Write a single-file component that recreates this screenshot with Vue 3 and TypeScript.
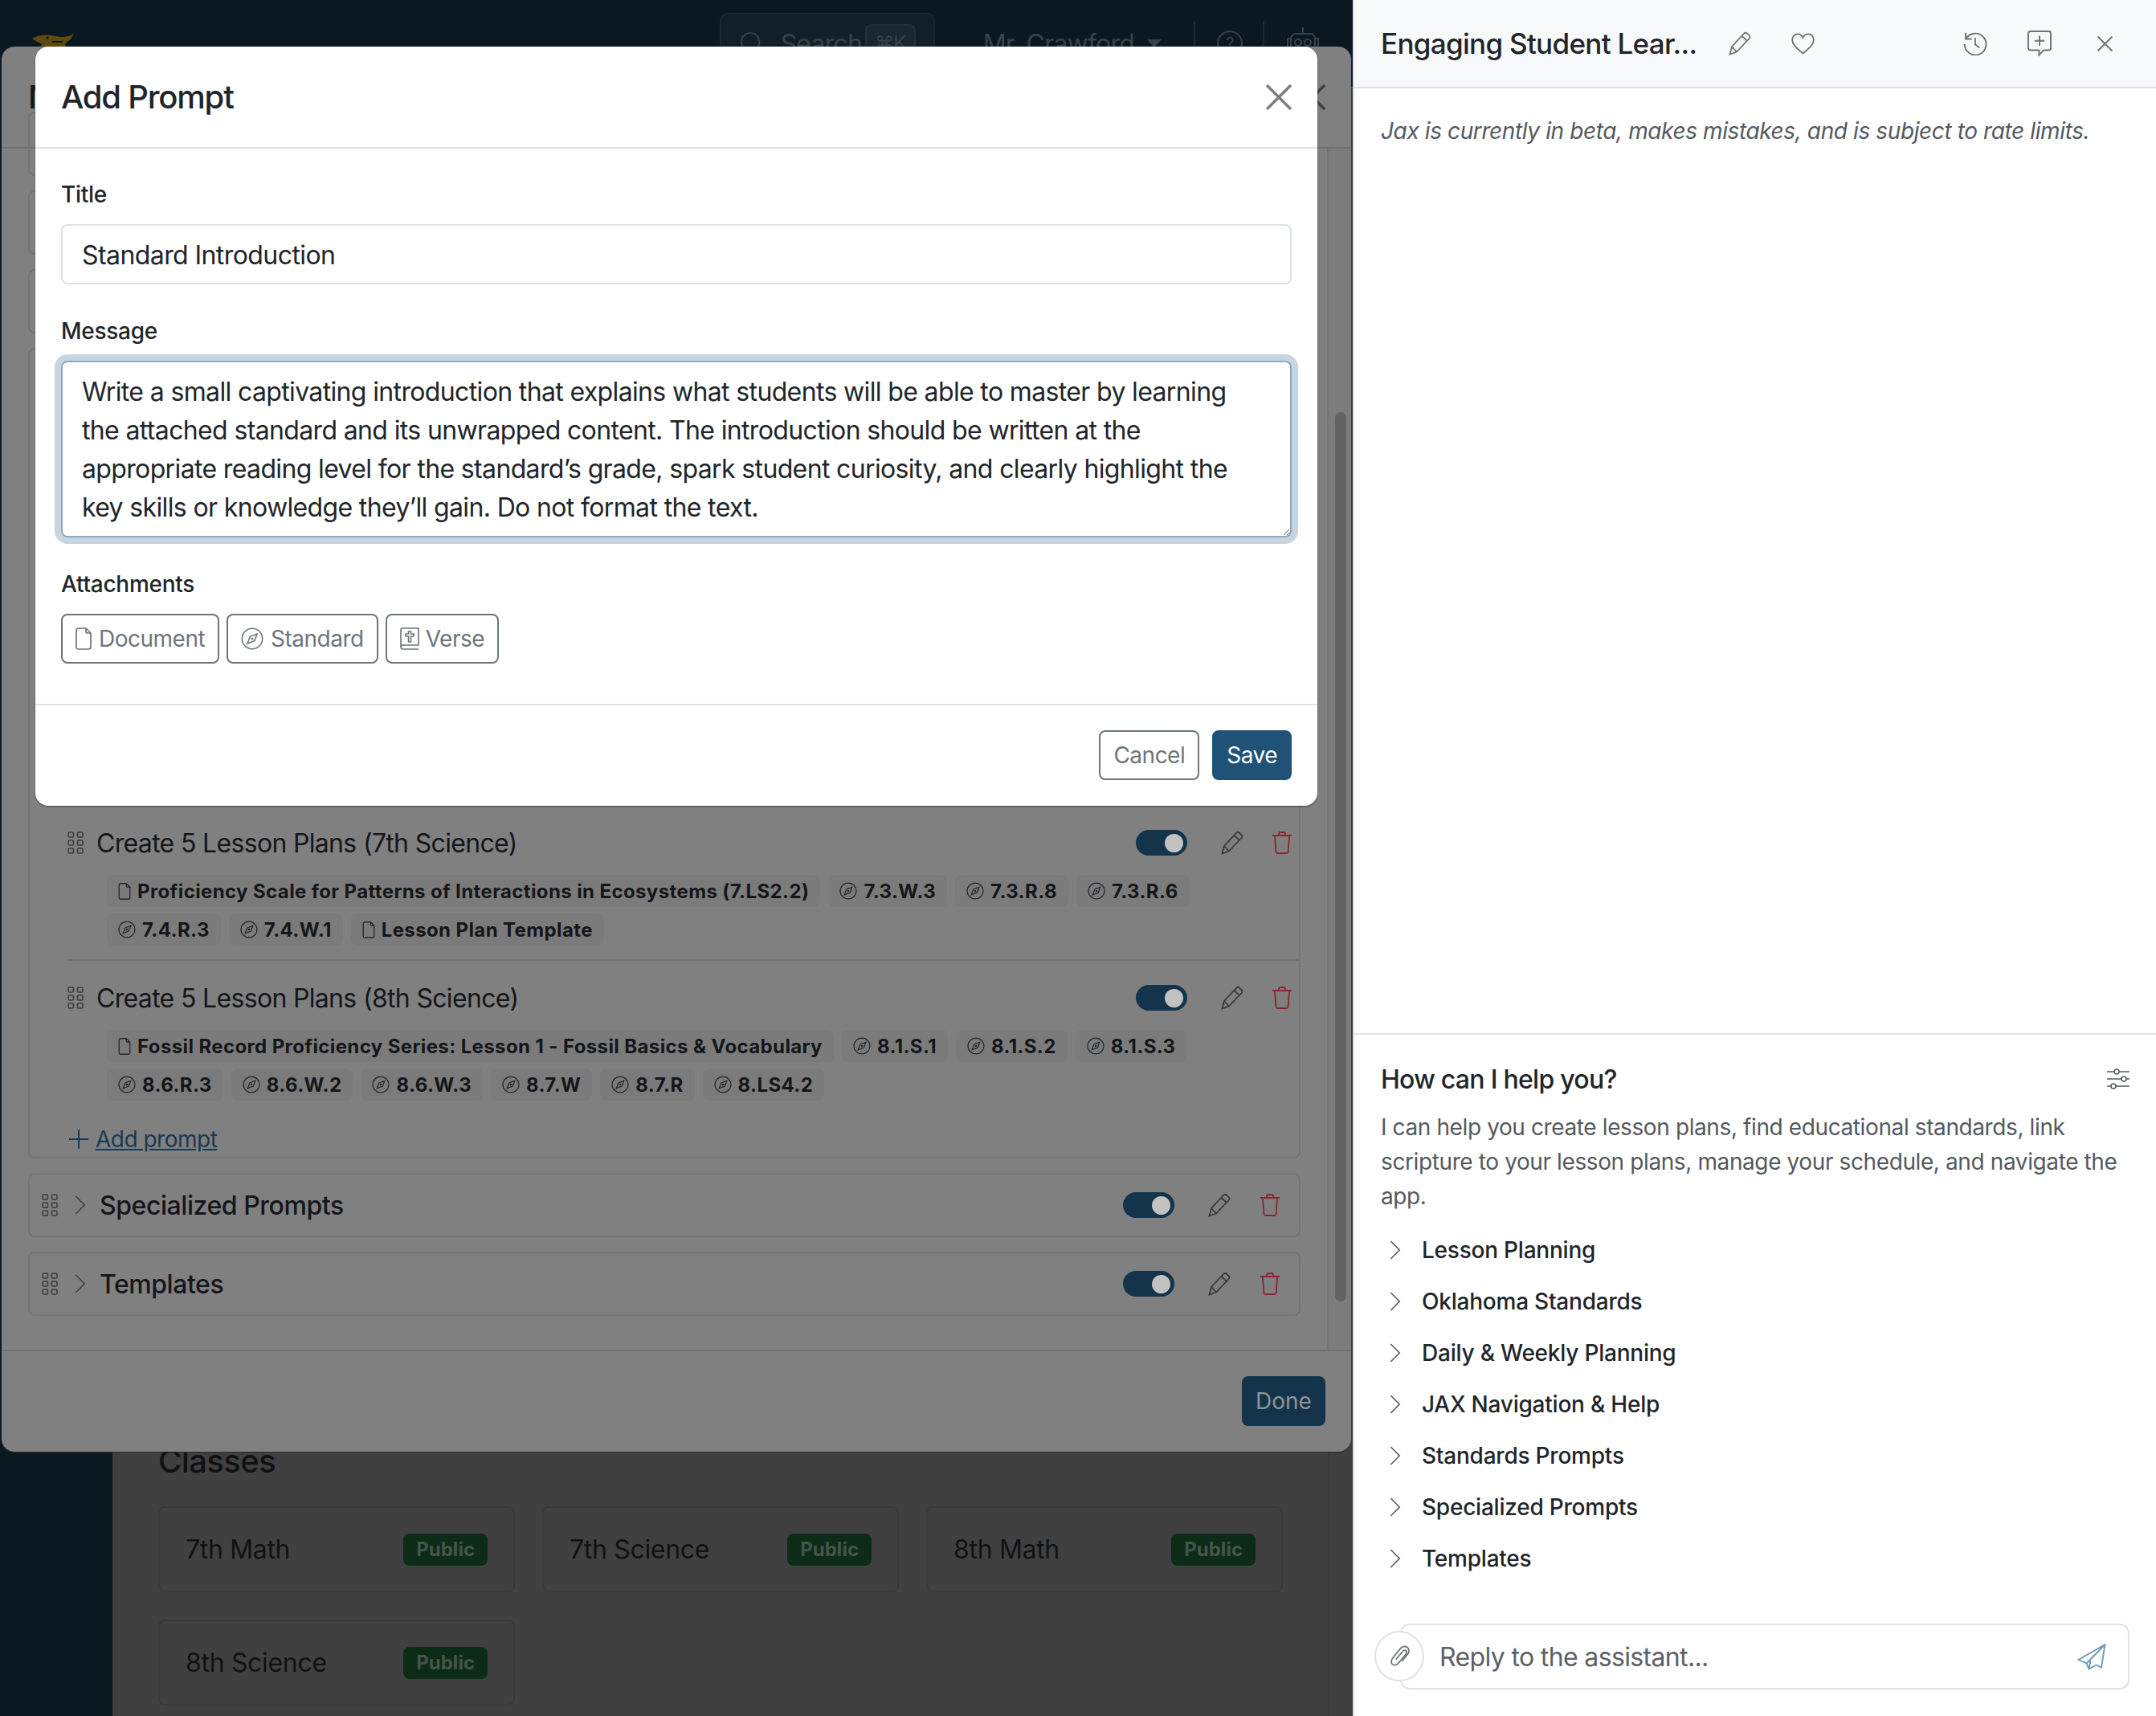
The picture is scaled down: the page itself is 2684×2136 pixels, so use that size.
<script setup lang="ts">
interface Chip {
  kind: "doc" | "std";
  label: string;
}

interface PromptRow {
  title: string;
  chips: Chip[];
}

const std = (label: string): Chip => ({ kind: "std", label });
const doc = (label: string): Chip => ({ kind: "doc", label });

const promptRows: PromptRow[] = [
  {
    title: "Create 5 Lesson Plans (7th Science)",
    chips: [
      doc("Proficiency Scale for Patterns of Interactions in Ecosystems (7.LS2.2)"),
      std("7.3.W.3"),
      std("7.3.R.8"),
      std("7.3.R.6"),
      std("7.4.R.3"),
      std("7.4.W.1"),
      doc("Lesson Plan Template"),
    ],
  },
  {
    title: "Create 5 Lesson Plans (8th Science)",
    chips: [
      doc("Fossil Record Proficiency Series: Lesson 1 - Fossil Basics & Vocabulary"),
      std("8.1.S.1"),
      std("8.1.S.2"),
      std("8.1.S.3"),
      std("8.6.R.3"),
      std("8.6.W.2"),
      std("8.6.W.3"),
      std("8.7.W"),
      std("8.7.R"),
      std("8.LS4.2"),
    ],
  },
];

const closedGroups = ["Specialized Prompts", "Templates"];
const classes = ["7th Math", "7th Science", "8th Math", "8th Science"];
const topics = [
  "Lesson Planning",
  "Oklahoma Standards",
  "Daily & Weekly Planning",
  "JAX Navigation & Help",
  "Standards Prompts",
  "Specialized Prompts",
  "Templates",
];
const message =
  "Write a small captivating introduction that explains what students will be able to master by learning the attached standard and its unwrapped content. The introduction should be written at the appropriate reading level for the standard\u2019s grade, spark student curiosity, and clearly highlight the key skills or knowledge they\u2019ll gain. Do not format the text.";
</script>

<template>
  <div class="screen">
    <svg class="sprite" aria-hidden="true">
      <symbol id="i-doc" viewBox="0 0 20 28" fill="none" stroke="currentColor" stroke-width="1.7">
        <path d="M4 1H13L19 7V24Q19 27 16 27H4Q1 27 1 24V4Q1 1 4 1ZM13 1V5Q13 7 15 7H19" />
      </symbol>
      <symbol id="i-compass" viewBox="0 0 28 28" fill="none" stroke="currentColor" stroke-width="1.6">
        <circle cx="14" cy="14" r="12.7" />
        <path d="M20 8L17 16.5L8 20L11.3 11.3Z" />
        <circle cx="14" cy="14" r=".8" />
      </symbol>
      <symbol id="i-bible" viewBox="0 0 24 28" fill="none" stroke="currentColor" stroke-width="1.6">
        <path d="M1 24V3Q1 1 3 1H23V22H4Q1 22 1 24.5T4 27H23" />
        <path d="M10.5 5H13.5V8H17V11H13.5V18H10.5V11H7V8H10.5Z" />
      </symbol>
      <symbol id="i-pencil" viewBox="0 0 28 30" fill="none" stroke="currentColor" stroke-width="1.8">
        <path d="M1.5 28.5L4 19L19.5 2.5Q21 1 22.7 2.5L25.8 5.3Q27.3 6.8 26 8.5L10 25.5Z" />
        <path d="M16.5 6L23.3 12.2M4 19L10 25.5" />
      </symbol>
      <symbol id="i-trash" viewBox="0 0 24 28" fill="none" stroke="currentColor" stroke-width="1.8">
        <path d="M0 5H24M8 5V3Q8 1 10 1H14Q16 1 16 3V5M3 5L4.4 25Q4.6 27 6.5 27H17.5Q19.4 27 19.6 25L21 5" />
      </symbol>
      <symbol id="i-grip" viewBox="0 0 20 28" fill="none" stroke="currentColor" stroke-width="1.6">
        <rect x="1" y="1" width="6.5" height="6" rx="1.6" />
        <rect x="12.5" y="1" width="6.5" height="6" rx="1.6" />
        <rect x="1" y="11" width="6.5" height="6" rx="1.6" />
        <rect x="12.5" y="11" width="6.5" height="6" rx="1.6" />
        <rect x="1" y="21" width="6.5" height="6" rx="1.6" />
        <rect x="12.5" y="21" width="6.5" height="6" rx="1.6" />
      </symbol>
      <symbol id="i-chevron" viewBox="0 0 16 28" fill="none" stroke="currentColor" stroke-width="1.8">
        <path d="M1.5 1.5L14 14L1.5 26.5" />
      </symbol>
      <symbol id="i-close" viewBox="0 0 32 32" fill="none" stroke="currentColor" stroke-width="3.4">
        <path d="M1 1L31 31M31 1L1 31" />
      </symbol>
      <symbol id="i-heart" viewBox="0 0 30 28" fill="none" stroke="currentColor" stroke-width="1.9">
        <path d="M15 26.5C6 19 1.2 14.5 1.2 8.7C1.2 4.5 4.4 1.5 8 1.5C11 1.5 13.5 3 15 6C16.5 3 19 1.5 22 1.5C25.6 1.5 28.8 4.5 28.8 8.7C28.8 14.5 24 19 15 26.5Z" />
      </symbol>
      <symbol id="i-history" viewBox="0 0 30 30" fill="none" stroke="currentColor" stroke-width="1.9">
        <path d="M3 2V9.5H10.5M3.4 9.5A13.4 13.4 0 1 1 1.7 16M15 8V16.5L20.5 20.5" />
      </symbol>
      <symbol id="i-chat" viewBox="0 0 30 32" fill="none" stroke="currentColor" stroke-width="1.9">
        <path d="M3.5 1H26.5Q29 1 29 3.5V22Q29 24.5 26.5 24.5H20L14.5 30.5V24.5H3.5Q1 24.5 1 22V3.5Q1 1 3.5 1ZM15 6.5V19M8.8 12.8H21.2" />
      </symbol>
      <symbol id="i-sliders" viewBox="0 0 28 28" fill="none" stroke="currentColor" stroke-width="1.6">
        <path d="M0 5H9M15 5H28M0 14H18M24 14H28M0 23H5M11 23H28" />
        <circle cx="12" cy="5" r="3" />
        <circle cx="21" cy="14" r="3" />
        <circle cx="8" cy="23" r="3" />
      </symbol>
      <symbol id="i-clip" viewBox="0 0 26 28" fill="none" stroke="currentColor" stroke-width="1.8">
        <path d="M8 18.5L17 7.5Q19 5.5 21 7T21 11.5L10.5 24Q7 27 3.8 24.5T3.5 17L14.5 3.5Q18 .3 22 2.2T24.5 10L16 20.5" />
      </symbol>
      <symbol id="i-send" viewBox="0 0 36 33" fill="none" stroke="currentColor" stroke-width="1.9">
        <path d="M34.5 1L1.5 20L11.5 24.5L14.5 31.5L23.5 26.5L30 29.5ZM34.5 1L11.5 24.5M14.5 31.5L16.5 21" />
      </symbol>
    </svg>

    <div class="app">
      <header class="topbar">
        <svg class="logo" viewBox="0 0 52 36">
          <path d="M0 7Q13 0 29 4Q41 7 52 1Q48 9 41 13L46 34H7L12 13Q6 12 0 7Z" fill="#5f4a10" />
          <circle cx="19" cy="6" r="1.6" fill="#0a1822" />
          <path d="M25 11H38" stroke="#0a1822" stroke-width="2" />
        </svg>
        <div class="search">
          <svg class="search-icon" viewBox="0 0 30 30" fill="none" stroke="currentColor" stroke-width="2">
            <circle cx="13" cy="13" r="12" />
            <path d="M22 22L29 29" />
          </svg>
          <span class="search-text">Search</span>
          <span class="kbd">⌘K</span>
        </div>
        <span class="user">Mr. Crawford</span>
        <span class="caret"></span>
        <span class="top-sep"></span>
        <span class="help">?</span>
        <span class="top-sep"></span>
        <svg class="robot" viewBox="0 0 42 40" fill="none" stroke="currentColor" stroke-width="2">
          <path d="M21 0V8" />
          <rect x="6" y="8" width="30" height="30" rx="6" />
          <circle cx="15" cy="19" r="4" />
          <circle cx="27" cy="19" r="4" />
          <path d="M6 14H2V28H6M36 14H40V28H36" />
        </svg>
      </header>

      <div class="app-body">
        <aside class="sidebar"></aside>
        <main class="main">
          <h2 class="classes-title">Classes</h2>
          <div class="class-grid">
            <div v-for="name in classes" :key="name" class="class-card">
              <span>{{ name }}</span>
              <span class="public">Public</span>
            </div>
          </div>
        </main>
        <div class="page-track"></div>
      </div>
    </div>

    <section class="back-modal">
      <div class="back-head">
        <span class="back-title">M</span>
        <svg class="back-close"><use href="#i-close" /></svg>
      </div>
      <div class="back-body">
        <div class="group-list">
          <div class="group group-first"></div>
          <div class="group"></div>
          <div class="group"></div>

          <div class="group group-open">
            <div v-for="row in promptRows" :key="row.title" class="prompt-row">
              <div class="row-head">
                <svg class="grip"><use href="#i-grip" /></svg>
                <span class="row-title">{{ row.title }}</span>
                <span class="toggle"><i></i></span>
                <svg class="row-pencil"><use href="#i-pencil" /></svg>
                <svg class="row-trash"><use href="#i-trash" /></svg>
              </div>
              <div class="chips">
                <span v-for="chip in row.chips" :key="chip.label" class="chip">
                  <svg v-if="chip.kind === 'doc'" class="chip-doc"><use href="#i-doc" /></svg>
                  <svg v-else class="chip-std"><use href="#i-compass" /></svg>
                  <span>{{ chip.label }}</span>
                </span>
              </div>
            </div>
            <div class="add-prompt">
              <svg class="plus" viewBox="0 0 24 24" fill="none" stroke="currentColor" stroke-width="2">
                <path d="M12 0V24M0 12H24" />
              </svg>
              <a class="add-link">Add prompt</a>
            </div>
          </div>

          <div v-for="name in closedGroups" :key="name" class="group group-closed">
            <svg class="grip"><use href="#i-grip" /></svg>
            <svg class="closed-chevron"><use href="#i-chevron" /></svg>
            <span class="closed-title">{{ name }}</span>
            <span class="toggle"><i></i></span>
            <svg class="row-pencil"><use href="#i-pencil" /></svg>
            <svg class="row-trash closed-trash"><use href="#i-trash" /></svg>
          </div>
        </div>
        <div class="back-track"><div class="back-thumb"></div></div>
      </div>
      <div class="back-foot">
        <span class="done">Done</span>
      </div>
    </section>

    <section class="front-modal">
      <div class="front-head">
        <h1 class="front-title">Add Prompt</h1>
        <svg class="front-close"><use href="#i-close" /></svg>
      </div>
      <div class="front-body">
        <div class="field-label">Title</div>
        <div class="field-input">Standard Introduction</div>
        <div class="field-label field-gap">Message</div>
        <textarea class="field-area" rows="4" spellcheck="false">{{ message }}</textarea>
        <div class="field-label field-gap">Attachments</div>
        <div class="attach-row">
          <span class="btn btn-outline"><svg class="btn-doc"><use href="#i-doc" /></svg>Document</span>
          <span class="btn btn-outline"><svg class="btn-std"><use href="#i-compass" /></svg>Standard</span>
          <span class="btn btn-outline"><svg class="btn-bible"><use href="#i-bible" /></svg>Verse</span>
        </div>
      </div>
      <div class="front-foot">
        <span class="btn btn-outline">Cancel</span>
        <span class="btn btn-primary">Save</span>
      </div>
    </section>

    <aside class="chat">
      <div class="chat-head">
        <span class="chat-title">Engaging Student Lear...</span>
        <svg class="chat-pencil"><use href="#i-pencil" /></svg>
        <svg class="chat-heart"><use href="#i-heart" /></svg>
        <svg class="chat-history"><use href="#i-history" /></svg>
        <svg class="chat-plus"><use href="#i-chat" /></svg>
        <svg class="chat-close"><use href="#i-close" /></svg>
      </div>
      <div class="chat-log">
        <em>Jax is currently in beta, makes mistakes, and is subject to rate limits.</em>
      </div>
      <div class="chat-help">
        <div class="help-head">
          <span class="help-title">How can I help you?</span>
          <svg class="help-sliders"><use href="#i-sliders" /></svg>
        </div>
        <p class="help-text">
          I can help you create lesson plans, find educational standards, link scripture to your lesson plans, manage your schedule, and navigate the app.
        </p>
        <div v-for="topic in topics" :key="topic" class="topic">
          <svg class="topic-chevron"><use href="#i-chevron" /></svg>
          <span>{{ topic }}</span>
        </div>
      </div>
      <div class="reply-wrap">
        <div class="reply">
          <span class="attach-circle"><svg class="clip"><use href="#i-clip" /></svg></span>
          <span class="reply-text">Reply to the assistant...</span>
          <svg class="send"><use href="#i-send" /></svg>
        </div>
      </div>
    </aside>
  </div>
</template>

<style scoped>
.screen {
  position: relative;
  display: flex;
  width: 2684px;
  height: 2136px;
  overflow: hidden;
  font-family: Inter, "Liberation Sans", sans-serif;
  color: #212529;
}

.sprite {
  position: absolute;
  width: 0;
  height: 0;
}

/* page behind the two dialogs, already dimmed twice */
.app {
  display: flex;
  flex-direction: column;
  flex: 0 0 1684px;
  height: 100%;
  background: #0a1822;
}

.topbar {
  display: flex;
  align-items: center;
  flex: 0 0 108px;
  padding: 0 41px 0 40px;
  color: #37424a;
  font-size: 32px;
  letter-spacing: -0.025em;
}

.logo {
  width: 52px;
  height: 36px;
  margin-top: 10px;
  margin-right: auto;
}

.search {
  display: flex;
  align-items: center;
  width: 268px;
  height: 76px;
  padding: 0 24px;
  box-sizing: border-box;
  background: #121f29;
  border: 2px solid #1b2832;
  border-radius: 10px;
}

.search-icon {
  width: 28px;
  height: 28px;
  flex: none;
}

.search-text {
  margin-left: 22px;
}

.kbd {
  margin-left: auto;
  margin-right: -2px;
  padding: 8px 10px;
  font-size: 24px;
  line-height: 28px;
  background: #1a2630;
  border: 2px solid #22303a;
  border-radius: 8px;
}

.user {
  margin-left: 60px;
}

.caret {
  margin-left: 16px;
  border-left: 9px solid transparent;
  border-right: 9px solid transparent;
  border-top: 10px solid #37424a;
}

.top-sep {
  width: 2px;
  height: 56px;
  margin: 0 27px 0 40px;
  background: #1c2933;
}

.help + .top-sep {
  margin-left: 25px;
}

.help {
  display: flex;
  align-items: center;
  justify-content: center;
  width: 32px;
  height: 32px;
  box-sizing: border-box;
  font-size: 20px;
  border: 2px solid #37424a;
  border-radius: 50%;
}

.robot {
  width: 42px;
  height: 40px;
}

.app-body {
  position: relative;
  display: flex;
  flex: 1;
  min-height: 0;
}

.sidebar {
  flex: 0 0 140px;
}

.main {
  display: flex;
  flex-direction: column;
  justify-content: flex-end;
  flex: 1;
  min-width: 0;
  padding: 0 0 13px 57px;
  background: #404040;
}

.classes-title {
  margin: 0 0 32px;
  font-size: 40px;
  line-height: 48px;
  font-weight: 500;
  letter-spacing: -0.015em;
  color: #101113;
}

.class-grid {
  display: grid;
  grid-template-columns: repeat(3, 444px);
  grid-auto-rows: 107px;
  column-gap: 34px;
  row-gap: 34px;
}

.class-card {
  display: flex;
  align-items: center;
  justify-content: space-between;
  padding: 0 32px;
  font-size: 32px;
  letter-spacing: -0.01em;
  color: #101113;
  border: 2px solid #393939;
  border-radius: 8px;
}

.public {
  padding: 0 16px;
  font-size: 24px;
  line-height: 40px;
  font-weight: 700;
  letter-spacing: 0;
  color: #46544a;
  background: #0c2c18;
  border-radius: 8px;
}

.page-track {
  flex: 0 0 29px;
  background: #404040;
  border-left: 2px solid #3a3a3a;
}

/* lower dialog */
.back-modal {
  position: absolute;
  left: 2px;
  top: 58px;
  display: flex;
  flex-direction: column;
  width: 1680px;
  height: 1749px;
  background: #808080;
  border-radius: 16px;
  box-shadow: 0 1px 2px #2c2c2c;
  overflow: hidden;
  color: #14161a;
}

.back-head {
  display: flex;
  align-items: center;
  justify-content: space-between;
  flex: 0 0 127px;
  box-sizing: border-box;
  padding: 0 32px 0 33px;
  border-bottom: 2px solid #707070;
}

.back-title {
  font-size: 40px;
  font-weight: 500;
}

.back-close {
  width: 32px;
  height: 32px;
  color: #404040;
}

.back-body {
  display: flex;
  flex: 1;
  min-height: 0;
}

.group-list {
  display: flex;
  flex-direction: column;
  gap: 18px;
  flex: 1;
  padding: 0 33px;
  min-width: 0;
}

.group {
  flex: none;
  box-sizing: border-box;
  height: 80px;
  border: 2px solid #747474;
  border-radius: 8px;
}

.group-first {
  margin-top: -46px;
}

.group-open {
  display: flex;
  flex-direction: column;
  justify-content: flex-end;
  height: 1009px;
  padding-left: 47px;
}

.prompt-row {
  padding: 22px 0 17px;
  border-bottom: 2px solid #6e6e6e;
}

.prompt-row + .prompt-row {
  border-bottom: 0;
  padding-bottom: 27px;
}

.row-head {
  display: flex;
  align-items: center;
  height: 48px;
  padding-right: 9px;
}

.grip {
  width: 20px;
  height: 28px;
  flex: none;
  color: #3b3d3f;
}

.row-title {
  flex: 1;
  margin-left: 16px;
  font-size: 32px;
  letter-spacing: -0.021em;
}

.toggle {
  display: flex;
  justify-content: flex-end;
  align-items: center;
  width: 64px;
  height: 32px;
  padding: 0 5px;
  box-sizing: border-box;
  background: #13344b;
  border-radius: 16px;
}

.toggle i {
  width: 23px;
  height: 23px;
  background: #c2c2c2;
  border-radius: 50%;
}

.row-pencil {
  width: 28px;
  height: 30px;
  flex: none;
  margin-left: 42px;
  color: #3a3a3a;
}

.row-trash {
  width: 24px;
  height: 28px;
  flex: none;
  margin-left: 36px;
  color: #8a2530;
}

.chips {
  display: flex;
  flex-wrap: wrap;
  gap: 8px 10px;
  margin: 16px 0 0 49px;
  padding-right: 120px;
}

.chip {
  display: inline-flex;
  align-items: center;
  gap: 8px;
  height: 40px;
  padding: 0 14px;
  font-size: 24px;
  font-weight: 700;
  letter-spacing: 0.016em;
  white-space: nowrap;
  background: #7b7b7b;
  border-radius: 8px;
}

.chip-doc {
  width: 16px;
  height: 21px;
  color: #24262a;
}

.chip-std {
  width: 22px;
  height: 22px;
  color: #24262a;
}

.add-prompt {
  display: flex;
  align-items: center;
  height: 42px;
  margin-bottom: 1px;
  padding-left: 2px;
  color: #173a54;
}

.plus {
  width: 24px;
  height: 24px;
}

.add-link {
  margin-left: 9px;
  font-size: 28px;
  letter-spacing: -0.018em;
  text-decoration: underline;
}

.group-closed {
  display: flex;
  align-items: center;
  padding: 0 24px 0 15px;
}

.closed-chevron {
  width: 14px;
  height: 26px;
  flex: none;
  margin-left: 21px;
  color: #3b3d3f;
}

.closed-title {
  flex: 1;
  margin-left: 17px;
  font-size: 32px;
  font-weight: 500;
  letter-spacing: -0.014em;
}

.closed-trash {
  margin-left: 37px;
}

.back-track {
  flex: 0 0 30px;
  box-sizing: border-box;
  padding: 328px 6px 0 8px;
  background: #7c7c7c;
  border-left: 2px solid #747474;
}

.back-thumb {
  height: 1107px;
  background: #626262;
  border-radius: 8px;
}

.back-foot {
  display: flex;
  justify-content: flex-end;
  flex: 0 0 127px;
  box-sizing: border-box;
  padding: 31px 32px 0 0;
  border-top: 2px solid #707070;
}

.done {
  width: 104px;
  height: 62px;
  font-size: 28px;
  line-height: 62px;
  text-align: center;
  color: #8f9498;
  background: #13344b;
  border-radius: 8px;
}

/* upper dialog */
.front-modal {
  position: absolute;
  left: 44px;
  top: 58px;
  display: flex;
  flex-direction: column;
  width: 1596px;
  height: 945px;
  background: #fff;
  border-radius: 16px;
  box-shadow: 0 1px 2px #444;
}

.front-head {
  display: flex;
  align-items: center;
  justify-content: space-between;
  flex: 0 0 127px;
  box-sizing: border-box;
  padding: 0 32px;
  border-bottom: 2px solid #dee2e6;
}

.front-title {
  margin: 0;
  font-size: 40px;
  line-height: 48px;
  font-weight: 500;
  letter-spacing: -0.03em;
}

.front-close {
  width: 32px;
  height: 32px;
  color: #7d7d7d;
}

.front-body {
  flex: 1;
  padding: 36px 32px 0;
}

.field-label {
  margin-bottom: 16px;
  font-size: 28px;
  line-height: 42px;
  font-weight: 500;
  letter-spacing: -0.01em;
}

.field-gap {
  margin-top: 37px;
}

.field-input {
  height: 75px;
  margin-bottom: 1px;
  box-sizing: border-box;
  padding: 0 24px;
  font-size: 32px;
  line-height: 73px;
  letter-spacing: -0.018em;
  border: 2px solid #dee2e6;
  border-radius: 8px;
}

.field-area {
  display: block;
  width: 100%;
  height: 220px;
  box-sizing: border-box;
  padding: 13px 66px 11px 24px;
  font: inherit;
  font-size: 32px;
  line-height: 48px;
  letter-spacing: -0.02em;
  color: #212529;
  border: 2px solid #8fa9be;
  border-radius: 8px;
  outline: none;
  box-shadow: 0 0 0 8px #c7d5e0;
}

.attach-row {
  display: flex;
  gap: 9px;
}

.btn {
  display: inline-flex;
  align-items: center;
  height: 62px;
  box-sizing: border-box;
  padding: 0 16px;
  font-size: 28px;
  letter-spacing: -0.018em;
  border: 2px solid #6c757d;
  border-radius: 8px;
}

.btn-outline {
  color: #6c757d;
}

.btn-primary {
  color: #fff;
  background: #1f5276;
  border-color: #1f5276;
}

.btn-doc {
  width: 20px;
  height: 28px;
  margin-right: 9px;
}

.btn-std {
  width: 28px;
  height: 28px;
  margin-right: 9px;
}

.btn-bible {
  width: 24px;
  height: 28px;
  margin-right: 8px;
}

.front-foot {
  display: flex;
  justify-content: flex-end;
  gap: 16px;
  flex: 0 0 127px;
  box-sizing: border-box;
  padding: 31px 32px 0;
  border-top: 2px solid #dee2e6;
}

/* assistant panel */
.chat {
  display: flex;
  flex-direction: column;
  flex: 0 0 1000px;
  box-sizing: border-box;
  height: 100%;
  background: #fff;
  border-left: 2px solid #dee2e6;
}

.chat-head {
  display: flex;
  align-items: center;
  flex: 0 0 110px;
  box-sizing: border-box;
  padding: 0 54px 0 33px;
  color: #6c757d;
  background: #f8f9fa;
  border-bottom: 2px solid #dee2e6;
}

.chat-title {
  font-size: 35px;
  font-weight: 500;
  letter-spacing: -0.02em;
  color: #212529;
}

.chat-pencil {
  width: 28px;
  height: 30px;
  margin-left: 40px;
}

.chat-heart {
  width: 29px;
  height: 27px;
  margin-left: 50px;
}

.chat-history {
  width: 30px;
  height: 30px;
  margin-left: auto;
}

.chat-plus {
  width: 30px;
  height: 32px;
  margin-left: 50px;
}

.chat-close {
  width: 19px;
  height: 19px;
  margin-left: 57px;
}

.chat-log {
  flex: 1;
  padding: 32px 33px 0;
  font-size: 28px;
  line-height: 42px;
  letter-spacing: -0.014em;
  color: #54595e;
}

.chat-help {
  padding: 31px 33px 0;
  border-top: 2px solid #dee2e6;
}

.help-head {
  display: flex;
  align-items: center;
  justify-content: space-between;
  height: 48px;
  margin-bottom: 15px;
}

.help-title {
  font-size: 32px;
  font-weight: 500;
  letter-spacing: -0.0225em;
}

.help-sliders {
  width: 28px;
  height: 28px;
  color: #54595e;
}

.help-text {
  margin: 0 0 13px;
  font-size: 28px;
  line-height: 43px;
  letter-spacing: -0.014em;
  color: #54595e;
}

.topic {
  display: flex;
  align-items: center;
  height: 64px;
  font-size: 28px;
  font-weight: 500;
  letter-spacing: -0.008em;
}

.topic-chevron {
  width: 14px;
  height: 28px;
  margin: 0 26px 0 11px;
  color: #54595e;
}

.reply-wrap {
  padding: 49px 33px 33px 57px;
}

.reply {
  position: relative;
  display: flex;
  align-items: center;
  justify-content: space-between;
  height: 82px;
  box-sizing: border-box;
  padding: 0 27px 0 47px;
  border: 2px solid #dee2e6;
  border-radius: 12px;
}

.attach-circle {
  position: absolute;
  left: -34px;
  top: 7px;
  display: flex;
  align-items: center;
  justify-content: center;
  width: 62px;
  height: 63px;
  box-sizing: border-box;
  background: #fff;
  border: 2px solid #dee2e6;
  border-radius: 50%;
}

.clip {
  width: 25px;
  height: 27px;
  color: #6c757d;
}

.reply-text {
  font-size: 32px;
  letter-spacing: -0.02em;
  color: #5c6166;
}

.send {
  width: 36px;
  height: 33px;
  color: #6f99b8;
}
</style>

<style>
html,
body {
  margin: 0;
  background: #0a1822;
}
</style>
